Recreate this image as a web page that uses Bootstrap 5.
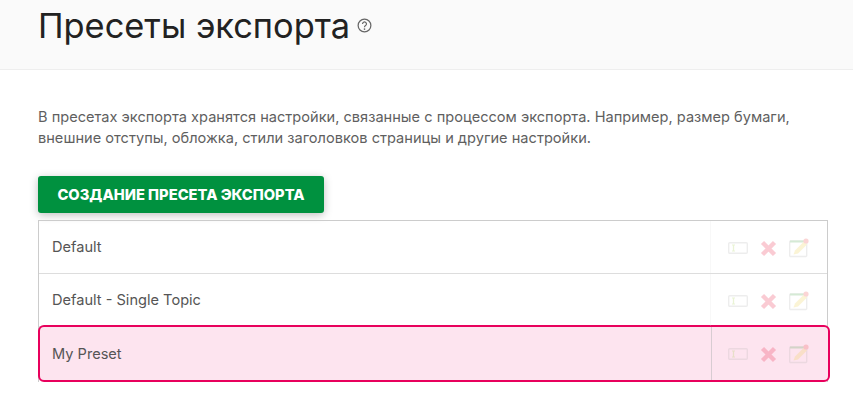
<!DOCTYPE html>
<html lang="ru">
<head>
<meta charset="utf-8">
<title>Пресеты экспорта</title>
<link href="https://cdn.jsdelivr.net/npm/bootstrap@5.3.0/dist/css/bootstrap.min.css" rel="stylesheet">
<style>
html,body{height:100%;overflow:hidden}
body{font-family:Inter,"Noto Sans",sans-serif;background:#fff;color:#555}
.head-band{height:70px;background:#fafafa;border-bottom:1px solid #eee;padding:0 38px;gap:7px}
.head-title{font-size:34.4px;font-weight:400;color:#222;margin:0;line-height:52px}
.help-ico{width:15px;height:15px;margin-top:18px}
.body-wrap{padding:37px 25px 0 38px}
.intro{font-size:14.6px;line-height:21px;color:#5f5f5f;margin:0 0 27px}
.make-btn{background:#00913f;color:#fff;font-weight:800;font-size:14.7px;line-height:20px;height:37px;width:286px;padding:9px 0 8px;border:0;border-radius:3px;box-shadow:0 2px 8px rgba(0,0,0,.25);text-align:center;white-space:nowrap;display:block}
.make-btn:hover{background:#00913f;color:#fff}
.preset-list{margin-top:7px;width:790px;border:1px solid #ccc;border-bottom:0}
.preset-row{height:53px;border-bottom:1px solid #ddd;font-size:14.6px;color:#555}
.preset-name{flex:1;padding-left:13px;height:100%;display:flex;align-items:center;padding-top:1px}
.preset-tools{width:117px;height:100%;border-left:1px solid #ddd;padding-left:17px;padding-top:2px;opacity:.2}
.preset-row.is-picked{height:57px;margin:-2px -2px 0 -1.5px;background:#fde4ef;border:2px solid #e8005c;border-radius:6px;width:792px}
.preset-row.is-picked .preset-tools{border-left:0;width:116px;padding-left:16.5px;padding-top:1px}
.preset-row.is-picked .preset-name{padding-left:12.5px;padding-top:2px}
.divider-pick{width:1px;height:100%;background:#d8ccd2}
.tool-a{width:20px;height:12px;margin-right:12px}
.tool-b{width:17px;height:17px;margin-right:12px}
.tool-c{width:20px;height:20px;margin-top:-1px}
</style>
</head>
<body>
<div class="head-band d-flex align-items-start">
  <h1 class="head-title">Пресеты экспорта</h1>
  <svg class="help-ico" viewBox="0 0 16 16" fill="none"><circle cx="8" cy="8" r="6.8" stroke="#666" stroke-width="1.3"/><path d="M5.9 6.3a2.1 2.1 0 1 1 3.2 1.8c-.8.5-1.1.9-1.1 1.7" stroke="#666" stroke-width="1.3"/><circle cx="8" cy="11.8" r=".9" fill="#666"/></svg>
</div>
<div class="body-wrap">
  <p class="intro">В пресетах экспорта хранятся настройки, связанные с процессом экспорта. Например, размер бумаги, внешние отступы, обложка, стили заголовков страницы и другие настройки.</p>
  <button class="btn make-btn" type="button">СОЗДАНИЕ ПРЕСЕТА ЭКСПОРТА</button>
  <div class="preset-list">
    <div class="preset-row d-flex align-items-center">
      <div class="preset-name">Default</div>
      <div class="preset-tools d-flex align-items-center">
        <svg class="tool-a" viewBox="0 0 20 12" fill="none"><rect x=".7" y=".7" width="18.6" height="10.6" rx="1" fill="#fff" stroke="#aaa" stroke-width="1.4"/><path d="M4 3h3M4 9h3M5.5 3v6" stroke="#9c3" stroke-width="1.2"/></svg>
        <svg class="tool-b" viewBox="0 0 17 17" fill="none"><path d="M2.5 2.5l12 12M14.5 2.5l-12 12" stroke="#e8002a" stroke-width="4.4"/></svg>
        <svg class="tool-c" viewBox="0 0 20 20" fill="none"><rect x=".7" y="3" width="17" height="15.5" rx="1" fill="#fff" stroke="#aaa" stroke-width="1.4"/><path d="M1 3.5h16" stroke="#393" stroke-width="2"/><path d="M4.5 16.5l1.5-4 9-9 3 3-9 9z" fill="#ec3"/><circle cx="17" cy="3" r="2.6" fill="#e33"/></svg>
      </div>
    </div>
    <div class="preset-row d-flex align-items-center">
      <div class="preset-name">Default - Single Topic</div>
      <div class="preset-tools d-flex align-items-center">
        <svg class="tool-a" viewBox="0 0 20 12" fill="none"><rect x=".7" y=".7" width="18.6" height="10.6" rx="1" fill="#fff" stroke="#aaa" stroke-width="1.4"/><path d="M4 3h3M4 9h3M5.5 3v6" stroke="#9c3" stroke-width="1.2"/></svg>
        <svg class="tool-b" viewBox="0 0 17 17" fill="none"><path d="M2.5 2.5l12 12M14.5 2.5l-12 12" stroke="#e8002a" stroke-width="4.4"/></svg>
        <svg class="tool-c" viewBox="0 0 20 20" fill="none"><rect x=".7" y="3" width="17" height="15.5" rx="1" fill="#fff" stroke="#aaa" stroke-width="1.4"/><path d="M1 3.5h16" stroke="#393" stroke-width="2"/><path d="M4.5 16.5l1.5-4 9-9 3 3-9 9z" fill="#ec3"/><circle cx="17" cy="3" r="2.6" fill="#e33"/></svg>
      </div>
    </div>
    <div class="preset-row is-picked d-flex align-items-center">
      <div class="preset-name">My Preset</div>
      <div class="divider-pick"></div>
      <div class="preset-tools d-flex align-items-center">
        <svg class="tool-a" viewBox="0 0 20 12" fill="none"><rect x=".7" y=".7" width="18.6" height="10.6" rx="1" fill="#fde4ef" stroke="#aaa" stroke-width="1.4"/><path d="M4 3h3M4 9h3M5.5 3v6" stroke="#9c3" stroke-width="1.2"/></svg>
        <svg class="tool-b" viewBox="0 0 17 17" fill="none"><path d="M2.5 2.5l12 12M14.5 2.5l-12 12" stroke="#e8002a" stroke-width="4.4"/></svg>
        <svg class="tool-c" viewBox="0 0 20 20" fill="none"><rect x=".7" y="3" width="17" height="15.5" rx="1" fill="#fde4ef" stroke="#aaa" stroke-width="1.4"/><path d="M1 3.5h16" stroke="#393" stroke-width="2"/><path d="M4.5 16.5l1.5-4 9-9 3 3-9 9z" fill="#ec3"/><circle cx="17" cy="3" r="2.6" fill="#e33"/></svg>
      </div>
    </div>
  </div>
</div>
</body>
</html>
